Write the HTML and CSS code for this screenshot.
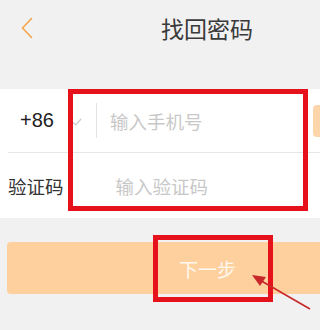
FILE: index.html
```html
<!DOCTYPE html>
<html lang="zh-CN">
<head>
    <meta charset="UTF-8">
    <meta name="viewport" content="width=device-width, initial-scale=1.0">
    <title>找回密码</title>
    <link rel="stylesheet" href="styles.css">
</head>
<body>
    <header class="top-bar">
        <svg class="back" width="12" height="22" viewBox="0 0 12 22">
            <path d="M10.5 1.5 L1.5 11 L10.5 20.5" fill="none" stroke="#f5a54a" stroke-width="1.6" stroke-linecap="round" stroke-linejoin="round"/>
        </svg>
        <h1>找回密码</h1>
    </header>

    <div class="form">
        <div class="row phone-row">
            <span class="code">+86</span>
            <svg class="tick" width="10" height="8" viewBox="0 0 10 8">
                <path d="M1 4.5 L3.8 7 L9 1" fill="none" stroke="#c9c9c9" stroke-width="1.2"/>
            </svg>
            <span class="sep"></span>
            <span class="placeholder">输入手机号</span>
            <span class="get-code"></span>
        </div>
        <div class="row">
            <span class="label">验证码</span>
            <span class="placeholder code-input">输入验证码</span>
        </div>
    </div>

    <div class="next-btn">下一步</div>

    <!-- 标注 -->
    <div class="mark mark-form"></div>
    <div class="mark mark-btn"></div>
    <svg class="arrow" width="80" height="50" viewBox="0 0 80 50">
        <line x1="70" y1="45" x2="18" y2="15" stroke="#c8282a" stroke-width="1.6"/>
        <polygon points="12,11 26,13 20,22" fill="#c8282a"/>
    </svg>
</body>
</html>
```

FILE: styles.css
```css
* {
    margin: 0;
    padding: 0;
    box-sizing: border-box;
}
body {
    width: 320px;
    height: 330px;
    overflow: hidden;
    position: relative;
    background-color: #f1f1f1;
    font-family: "Noto Sans CJK SC", "Noto Sans", sans-serif;
    color: #333;
}
.top-bar {
    height: 89px;
    display: flex;
    align-items: flex-start;
    padding: 16px 0 0 21px;
}
.top-bar .back {
    margin-top: 1px;
}
.top-bar h1 {
    margin-left: 128px;
    font-size: 23px;
    font-weight: normal;
    line-height: 24px;
    color: #3a3a3a;
}
.form {
    background: white;
    padding-left: 8px;
}
.row {
    height: 64px;
    display: flex;
    align-items: center;
    font-size: 18px;
}
.phone-row {
    border-bottom: 1px solid #e6e6e6;
    padding-left: 12px;
}
.row + .row {
    height: 65px;
}
.code {
    font-family: "Liberation Sans", Arial, sans-serif;
    font-size: 20px;
    color: #222;
    width: 52px;
}
.tick {
    margin-top: 2px;
}
.sep {
    width: 1px;
    height: 35px;
    background: #e3e3e3;
    margin-left: 14px;
}
.placeholder {
    color: #c8c8c8;
    margin-left: 13px;
    font-size: 18.5px;
}
.get-code {
    width: 7px;
    height: 32px;
    margin-left: auto;
    background: #fcd6aa;
    border-radius: 4px 0 0 4px;
}
.label {
    color: #333;
    font-size: 18.5px;
}
.code-input {
    margin-left: 52px;
}
.next-btn {
    margin: 24px 0 0 7px;
    width: 313px;
    height: 52px;
    border-radius: 4px 0 0 4px;
    background: #fdd09e;
    color: #fff8ee;
    font-size: 19px;
    display: flex;
    align-items: center;
    padding-left: 172px;
}
.mark {
    position: absolute;
    border: 5px solid #e5121b;
}
.mark-form {
    left: 68px;
    top: 89px;
    width: 240px;
    height: 122px;
}
.mark-btn {
    left: 153px;
    top: 235px;
    width: 120px;
    height: 67px;
}
.arrow {
    position: absolute;
    left: 240px;
    top: 264px;
}
```
